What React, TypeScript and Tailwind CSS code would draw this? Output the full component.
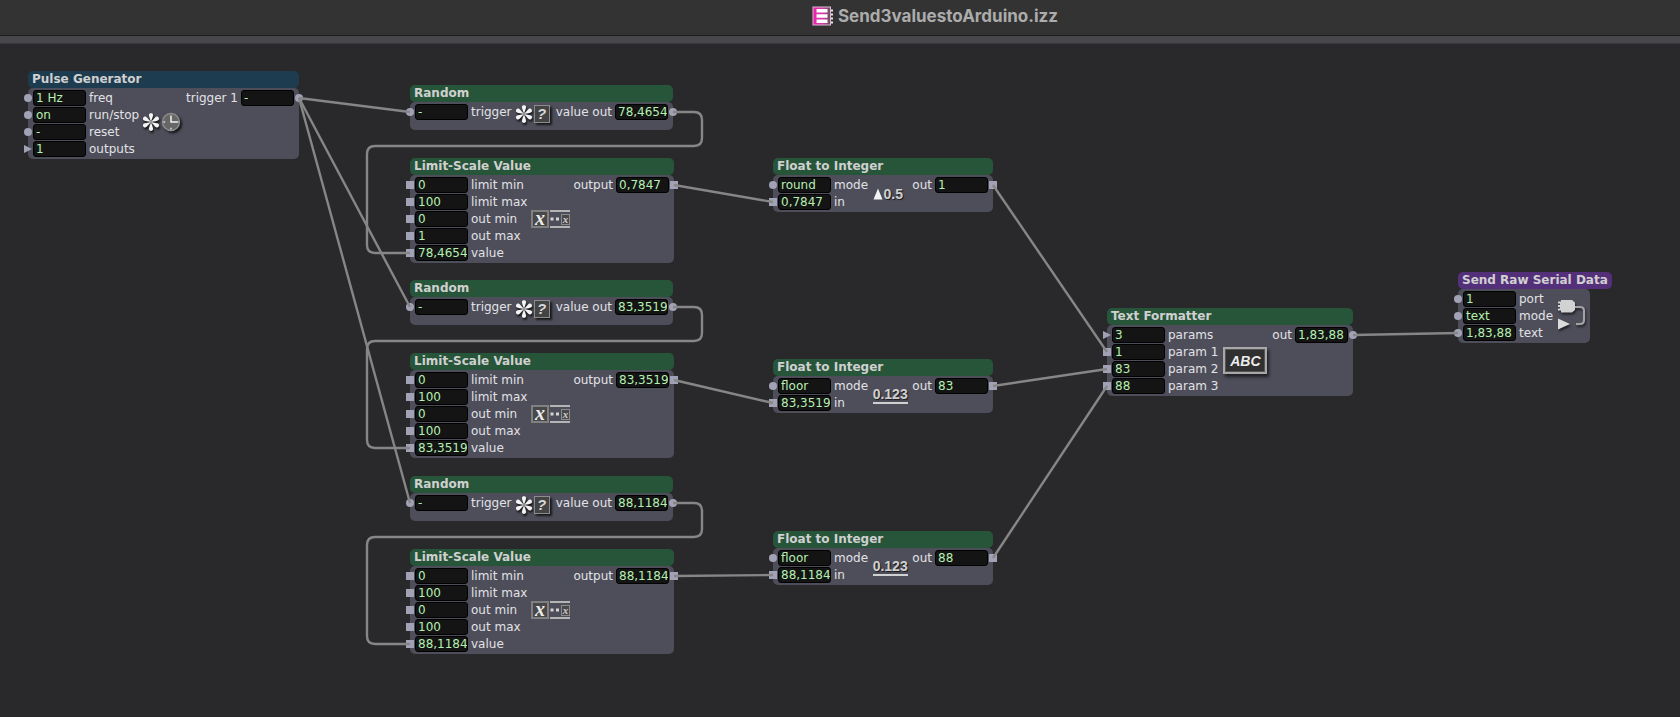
import React from 'react';
import clsx from 'clsx';

type PortShape = 'circle' | 'square' | 'triangle';

interface Port {
  label: string;
  value: string;
  shape: PortShape;
}

interface Actor {
  id: string;
  title: string;
  x: number;
  y: number;
  width: number;
  titleWidth?: number;
  color: string;
  icon: React.ReactNode;
  inputs: Port[];
  outputs: Port[];
}

interface Link {
  from: string;
  to: string;
  row: number;
  looped?: boolean;
}

const ROW_HEIGHT = 17;
const FIRST_ROW = 27;

const port = (label: string, value: string, shape: PortShape = 'square'): Port => ({ label, value, shape });

const Asterisk = () => (
  <svg width="20" height="20" viewBox="0 0 20 20" className="drop-shadow-[1px_2px_1px_rgba(0,0,0,0.8)]">
    {[0, 60, 120, 180, 240, 300].map((angle) => (
      <path
        key={angle}
        d="M10 10 C9.3 7 7.6 4.2 8 2.4 C8.4 0.7 11.6 0.7 12 2.4 C12.4 4.2 10.7 7 10 10Z"
        fill="#f4f4f4"
        transform={`rotate(${angle} 10 10)`}
      />
    ))}
  </svg>
);

const Clock = () => (
  <svg width="20" height="20" viewBox="0 0 20 20" className="drop-shadow-[2px_2px_1px_rgba(0,0,0,0.7)]">
    <circle cx="10" cy="10" r="8.5" fill="#666666" stroke="#8e8e8e" strokeWidth="1.4" />
    <path d="M10 3.5V10H16" fill="none" stroke="#f2f2f2" strokeWidth="1.5" />
    <path d="M10 15.8V17.5M2.5 10H4.2M16 10H17.5" stroke="#e0e0e0" strokeWidth="1.4" />
  </svg>
);

const PulseIcon = () => (
  <div className="flex pr-1 pb-1">
    <Asterisk />
    <Clock />
  </div>
);

const RandomIcon = () => (
  <div className="flex items-center pr-1 pb-1">
    <Asterisk />
    <span className="flex h-[18px] w-4 items-center justify-center border border-[#8c8c8c] bg-[#444444] font-['Liberation_Sans'] text-[15px] leading-4 font-bold text-[#d8d8d8] italic shadow-[2px_2px_2px_rgba(0,0,0,0.7)]">
      ?
    </span>
  </div>
);

const ScaleIcon = () => (
  <div className="flex items-center gap-px">
    <span className="flex h-[18px] w-[18px] items-center justify-center border-2 border-[#808080] bg-[#484848] pb-[3px] font-['Liberation_Serif'] text-[20px] leading-3 font-bold text-[#ececec] italic">
      x
    </span>
    <span className="flex h-[18px] w-5 items-center justify-end border-y-2 border-[#b4b4b4]">
      <svg width="11" height="4" viewBox="0 0 11 4">
        <path d="M0.5 0.5h3v3h-3zM6 0.5h3v3h-3z" fill="#d4d4d4" />
      </svg>
      <span className="flex h-[11px] w-[9px] items-center justify-center border border-[#8a8a8a] bg-[#484848] pb-px font-['Liberation_Serif'] text-[11px] leading-2 font-bold text-[#d0d0d0] italic">
        x
      </span>
    </span>
  </div>
);

const numberIcon =
  "font-['Liberation_Sans'] text-[14px] leading-4 font-bold text-[#d0d0d0] [text-shadow:1px_1px_1px_rgba(0,0,0,0.7)]";

const RoundIcon = () => (
  <div className={clsx(numberIcon, 'flex items-center pr-1')}>
    <svg width="10" height="12" viewBox="0 0 10 12">
      <path d="M5 0.5L9.5 11.5H0.5Z" fill="#f2f2f2" />
    </svg>
    0.5
  </div>
);

const FloorIcon = () => <div className={clsx(numberIcon, 'border-b-2 border-[#d0d0d0]')}>0.123</div>;

const TextIcon = () => (
  <div className="flex h-[27px] w-11 items-center justify-center border-2 border-[#a8a8a8] bg-[#303030] font-['Liberation_Sans'] text-[14px] leading-4 font-bold text-[#ececec] italic shadow-[inset_0_0_0_1px_#555555,2px_3px_3px_rgba(0,0,0,0.6)]">
    ABC
  </div>
);

const SerialIcon = () => (
  <svg width="30" height="36" viewBox="0 0 30 36" className="drop-shadow-[1px_2px_1px_rgba(0,0,0,0.6)]">
    <path d="M18 9H23Q27 9 27 13V22Q27 26 23 26H19" fill="none" stroke="#a2a2a6" strokeWidth="2.200" />
    <path d="M1 3.5H4V2H15L18 4.500V12L15 14.500H4V12.500H1V10.500H3V9H1V7H3V5.500H1Z" fill="#d2d2d2" />
    <path d="M1 20.500L13 26L1 31.500Z" fill="#dcdcdc" />
  </svg>
);

const GREEN = 'bg-[#27553a]';

const random = (id: string, y: number, value: string): Actor => ({
  id,
  title: 'Random',
  x: 410,
  y,
  width: 263,
  color: GREEN,
  icon: <RandomIcon />,
  inputs: [port('trigger', '-', 'circle')],
  outputs: [port('value out', value, 'circle')],
});

const limitScale = (id: string, y: number, max: string, value: string, output: string): Actor => ({
  id,
  title: 'Limit-Scale Value',
  x: 410,
  y,
  width: 264,
  color: GREEN,
  icon: <ScaleIcon />,
  inputs: [
    port('limit min', '0'),
    port('limit max', '100'),
    port('out min', '0'),
    port('out max', max),
    port('value', value),
  ],
  outputs: [port('output', output)],
});

const floatToInt = (id: string, y: number, mode: string, value: string, output: string): Actor => ({
  id,
  title: 'Float to Integer',
  x: 773,
  y,
  width: 220,
  color: GREEN,
  icon: mode === 'round' ? <RoundIcon /> : <FloorIcon />,
  inputs: [port('mode', mode, 'circle'), port('in', value)],
  outputs: [port('out', output)],
});

// positions are relative to the canvas
const actors: Actor[] = [
  {
    id: 'pulse',
    title: 'Pulse Generator',
    x: 28,
    y: 27,
    width: 271,
    color: 'bg-[#1d3c50]',
    icon: <PulseIcon />,
    inputs: [
      port('freq', '1 Hz', 'circle'),
      port('run/stop', 'on', 'circle'),
      port('reset', '-', 'circle'),
      port('outputs', '1', 'triangle'),
    ],
    outputs: [port('trigger 1', '-', 'circle')],
  },
  random('random1', 41, '78,4654'),
  limitScale('scale1', 114, '1', '78,4654', '0,7847'),
  random('random2', 236, '83,3519'),
  limitScale('scale2', 309, '100', '83,3519', '83,3519'),
  random('random3', 432, '88,1184'),
  limitScale('scale3', 505, '100', '88,1184', '88,1184'),
  floatToInt('int1', 114, 'round', '0,7847', '1'),
  floatToInt('int2', 315, 'floor', '83,3519', '83'),
  floatToInt('int3', 487, 'floor', '88,1184', '88'),
  {
    id: 'formatter',
    title: 'Text Formatter',
    x: 1107,
    y: 264,
    width: 246,
    color: GREEN,
    icon: <TextIcon />,
    inputs: [port('params', '3', 'triangle'), port('param 1', '1'), port('param 2', '83'), port('param 3', '88')],
    outputs: [port('out', '1,83,88', 'circle')],
  },
  {
    id: 'serial',
    title: 'Send Raw Serial Data',
    x: 1458,
    y: 228,
    width: 132,
    titleWidth: 154,
    color: 'bg-[#55307a]',
    icon: <SerialIcon />,
    inputs: [port('port', '1', 'circle'), port('mode', 'text', 'circle'), port('text', '1,83,88', 'circle')],
    outputs: [],
  },
];

const links: Link[] = [
  { from: 'pulse', to: 'random1', row: 0 },
  { from: 'pulse', to: 'random2', row: 0 },
  { from: 'pulse', to: 'random3', row: 0 },
  { from: 'random1', to: 'scale1', row: 4, looped: true },
  { from: 'random2', to: 'scale2', row: 4, looped: true },
  { from: 'random3', to: 'scale3', row: 4, looped: true },
  { from: 'scale1', to: 'int1', row: 1 },
  { from: 'scale2', to: 'int2', row: 1 },
  { from: 'scale3', to: 'int3', row: 1 },
  { from: 'int1', to: 'formatter', row: 1 },
  { from: 'int2', to: 'formatter', row: 2 },
  { from: 'int3', to: 'formatter', row: 3 },
  { from: 'formatter', to: 'serial', row: 2 },
];

const linkPath = ({ from, to, row, looped }: Link) => {
  const source = actors.find((a) => a.id === from)!;
  const target = actors.find((a) => a.id === to)!;
  const x1 = source.x + source.width;
  const y1 = source.y + FIRST_ROW;
  const x2 = target.x;
  const y2 = target.y + FIRST_ROW + row * ROW_HEIGHT;
  if (!looped) return `M${x1} ${y1}L${x2} ${y2}`;

  // goes out to the right, back between the two actors, and in from the left
  const right = x1 + 29;
  const left = x2 - 43;
  const mid = y1 + 34;
  return [
    `M${x1} ${y1}H${right - 8}Q${right} ${y1} ${right} ${y1 + 8}`,
    `V${mid - 8}Q${right} ${mid} ${right - 8} ${mid}`,
    `H${left + 8}Q${left} ${mid} ${left} ${mid + 8}`,
    `V${y2 - 8}Q${left} ${y2} ${left + 8} ${y2}H${x2}`,
  ].join('');
};

const PortMark = ({ shape, side }: { shape: PortShape; side: 'left' | 'right' }) => (
  <span
    className={clsx(
      'absolute top-1 h-2 w-2 bg-[#a2a2b6]',
      side === 'left' ? '-left-1' : '-right-1',
      shape === 'circle' && 'rounded-full',
      shape === 'triangle' && '[clip-path:polygon(0_0,100%_50%,0_100%)]'
    )}
  />
);

const PortRow = ({ id, item, side }: { id: string; item: Port; side: 'left' | 'right' }) => (
  <div className={clsx('relative flex h-4 items-center gap-[3px]', side === 'left' ? 'pl-[5px]' : 'flex-row-reverse pr-[5px]')}>
    <PortMark shape={item.shape} side={side} />
    <input
      id={id}
      defaultValue={item.value}
      readOnly={side === 'right'}
      className="h-4 w-[53px] rounded-[3px] border border-black bg-[#131413] pl-[2px] text-[12px] leading-[14px] text-[#b6efb2] outline-none"
    />
    <label htmlFor={id} className="whitespace-nowrap">
      {item.label}
    </label>
  </div>
);

const ActorBox = ({ actor }: { actor: Actor }) => (
  <section className="absolute" style={{ left: actor.x, top: actor.y, width: actor.width }}>
    <h2
      className={clsx('h-[17px] rounded-[5px] pl-1 font-bold whitespace-nowrap text-[#d0d0d0]', actor.color)}
      style={{ width: actor.titleWidth }}
    >
      {actor.title}
    </h2>
    <div className="flex rounded-[5px] bg-[#4e4e5a] py-[2px]">
      <div className="flex flex-col gap-px">
        {actor.inputs.map((item, i) => (
          <PortRow key={item.label} id={`${actor.id}-in-${i}`} item={item} side="left" />
        ))}
      </div>
      <div className="flex flex-1 items-center justify-center">{actor.icon}</div>
      <div className="flex flex-col gap-px">
        {actor.outputs.map((item, i) => (
          <PortRow key={item.label} id={`${actor.id}-out-${i}`} item={item} side="right" />
        ))}
      </div>
    </div>
  </section>
);

const FileIcon = () => (
  <svg width="22" height="20" viewBox="0 0 22 20">
    <defs>
      <linearGradient id="file" x1="0" x2="1">
        <stop offset="0" stopColor="#f01fae" />
        <stop offset="0.55" stopColor="#d63aa6" />
        <stop offset="1" stopColor="#5e5560" />
      </linearGradient>
    </defs>
    <rect x="1" y="1" width="17.500" height="18" fill="url(#file)" stroke="#d9b9d0" strokeWidth="1" />
    <path d="M4.500 3H15.500V6.500H4.500zM4.500 8.200H15.500V11.700H4.500zM4.500 13.500H15.500V17H4.500z" fill="#fff" />
    <path d="M19 3.500h2v2h-2zM19 7.500h2v2h-2zM19 11.500h2v2h-2zM19 15.500h2v2h-2z" fill="#e6e6e6" />
  </svg>
);

export default function App() {
  return (
    <div className="flex min-h-screen flex-col bg-[#29292b] font-['DejaVu_Sans',sans-serif] text-[12px] leading-[17px] text-[#e2e2e6]">
      <header className="flex h-9 items-center justify-center gap-1 border-b border-[#1c1c1c] bg-[#333333] pb-[3px] pl-[190px]">
        <FileIcon />
        <h1 className="font-['Inter',sans-serif] text-[17px] leading-5 font-bold text-[#acacac]">Send3valuestoArduino.izz</h1>
      </header>
      <div className="h-2 border-b border-[#38383b] bg-[#48474c]" />
      <main className="relative flex-1">
        {actors.map((actor) => (
          <ActorBox key={actor.id} actor={actor} />
        ))}
        <svg className="pointer-events-none absolute inset-0 h-full w-full" fill="none" stroke="#868686" strokeWidth="2.400">
          {links.map((link) => (
            <path key={`${link.from}-${link.to}`} d={linkPath(link)} />
          ))}
        </svg>
      </main>
    </div>
  );
}
